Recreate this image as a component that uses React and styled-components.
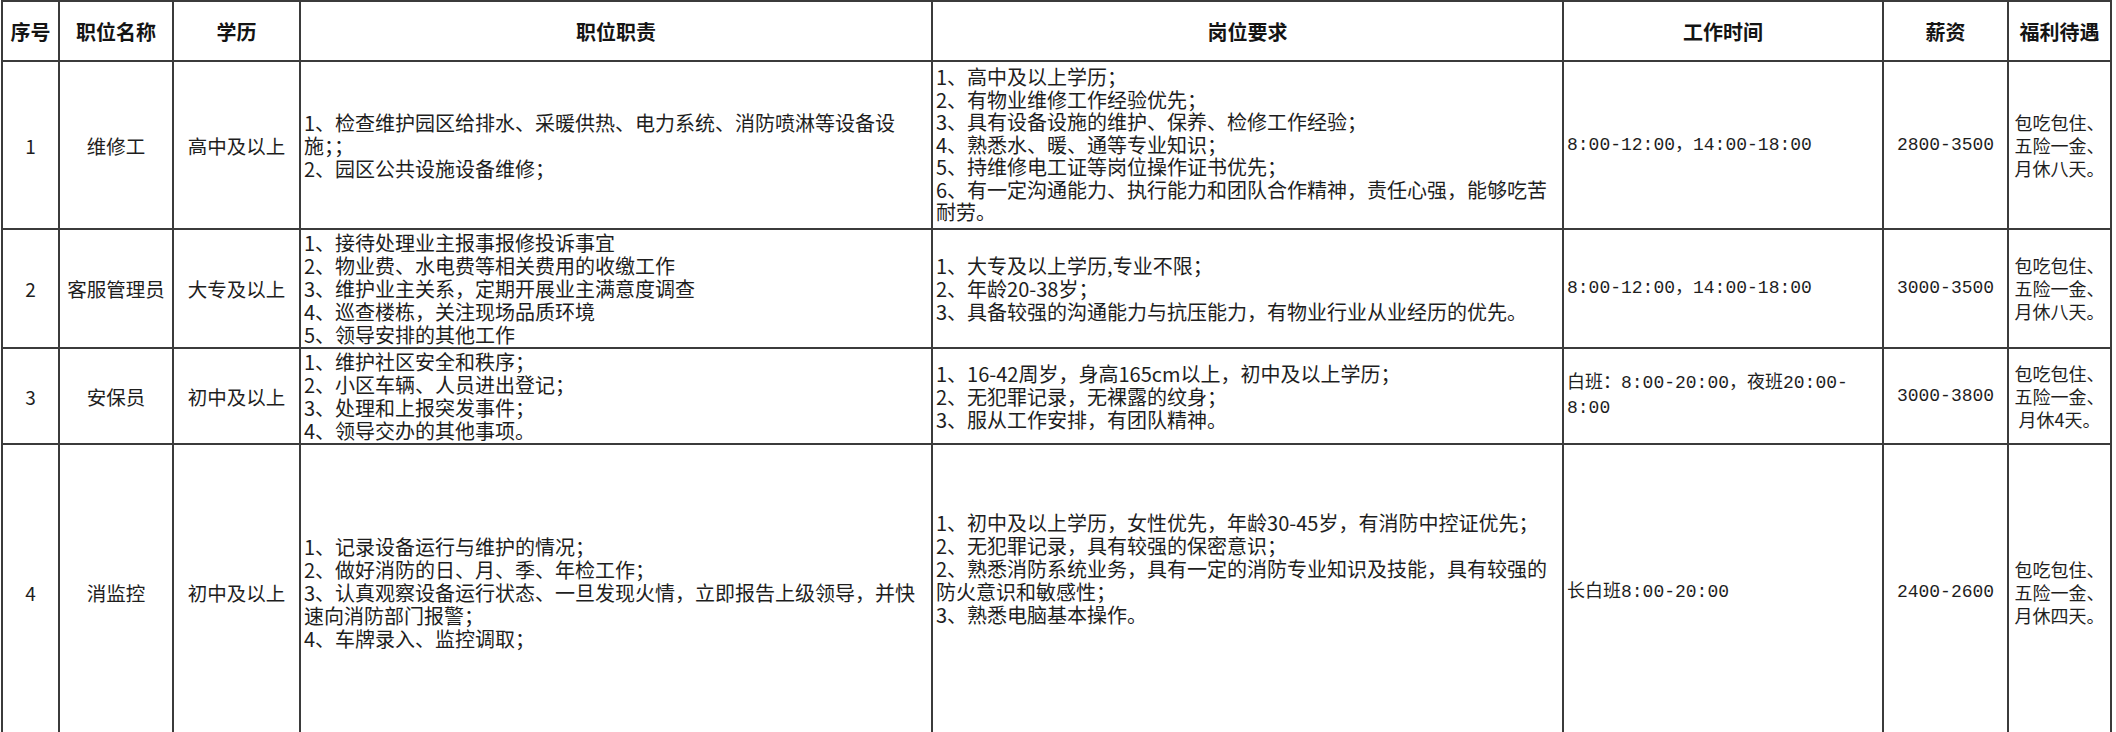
import React from "react";
import styled, { createGlobalStyle } from "styled-components";

const Global = createGlobalStyle`
  html, body {
    margin: 0;
    padding: 0;
    background: #ffffff;
    overflow: hidden;
  }
  body {
    font-family: "Noto Sans CJK SC", "Noto Sans", sans-serif;
    color: #1e1e1e;
  }
`;

const Sheet = styled.div`
  display: grid;
  grid-template-columns: 55px 112px 125px 630px 629px 318px 123px 101px;
  grid-template-rows: 58px 166px 117px 94px 294px;
  gap: 2px;
  padding: 2px;
  margin-left: 1px;
  width: max-content;
  background: #3b3b3b;
`;

const HeadCell = styled.div`
  background: #ffffff;
  display: flex;
  align-items: center;
  justify-content: center;
  font-family: "Noto Sans CJK SC", sans-serif;
  font-weight: 700;
  font-size: 20px;
  color: #141414;
  white-space: nowrap;
`;

const fonts = {
  body: `"Noto Sans CJK SC", "Noto Sans", sans-serif`,
  mono: `"Liberation Mono", "Noto Sans CJK SC", monospace`,
};

const Cell = styled.div`
  background: #ffffff;
  display: flex;
  flex-direction: column;
  justify-content: center;
  align-items: ${(p) => (p.$align === "left" ? "flex-start" : "center")};
  text-align: ${(p) => (p.$align === "left" ? "left" : "center")};
  padding-left: ${(p) => (p.$align === "left" ? "3px" : "2px")};
  padding-right: 2px;
  padding-bottom: ${(p) => (p.$lift ? `${p.$lift}px` : "0")};
  font-family: ${(p) => fonts[p.$font || "body"]};
  font-size: ${(p) => p.$size || 20}px;
  line-height: ${(p) => p.$lh || 23}px;
  min-width: 0;
  box-sizing: border-box;
`;

const Line = styled.div`
  white-space: pre;
`;

const columns = ["序号", "职位名称", "学历", "职位职责", "岗位要求", "工作时间", "薪资", "福利待遇"];

const jobs = [
  {
    no: "1",
    name: "维修工",
    edu: "高中及以上",
    duty: [
      "1、检查维护园区给排水、采暖供热、电力系统、消防喷淋等设备设",
      "施；；",
      "2、园区公共设施设备维修；",
    ],
    req: [
      "1、高中及以上学历；",
      "2、有物业维修工作经验优先；",
      "3、具有设备设施的维护、保养、检修工作经验；",
      "4、熟悉水、暖、通等专业知识；",
      "5、持维修电工证等岗位操作证书优先；",
      "6、有一定沟通能力、执行能力和团队合作精神，责任心强，能够吃苦",
      "耐劳。",
    ],
    reqLh: 22.5,
    time: ["8:00-12:00，14:00-18:00"],
    pay: "2800-3500",
    welfare: ["包吃包住、", "五险一金、", "月休八天。"],
  },
  {
    no: "2",
    name: "客服管理员",
    edu: "大专及以上",
    duty: [
      "1、接待处理业主报事报修投诉事宜",
      "2、物业费、水电费等相关费用的收缴工作",
      "3、维护业主关系，定期开展业主满意度调查",
      "4、巡查楼栋，关注现场品质环境",
      "5、领导安排的其他工作",
    ],
    req: [
      "1、大专及以上学历,专业不限；",
      "2、年龄20-38岁；",
      "3、具备较强的沟通能力与抗压能力，有物业行业从业经历的优先。",
    ],
    time: ["8:00-12:00，14:00-18:00"],
    pay: "3000-3500",
    welfare: ["包吃包住、", "五险一金、", "月休八天。"],
  },
  {
    no: "3",
    name: "安保员",
    edu: "初中及以上",
    duty: [
      "1、维护社区安全和秩序；",
      "2、小区车辆、人员进出登记；",
      "3、处理和上报突发事件；",
      "4、领导交办的其他事项。",
    ],
    req: [
      "1、16-42周岁，身高165cm以上，初中及以上学历；",
      "2、无犯罪记录，无裸露的纹身；",
      "3、服从工作安排，有团队精神。",
    ],
    time: ["白班：8:00-20:00，夜班20:00-", "8:00"],
    pay: "3000-3800",
    welfare: ["包吃包住、", "五险一金、", "月休4天。"],
  },
  {
    no: "4",
    name: "消监控",
    edu: "初中及以上",
    duty: [
      "1、记录设备运行与维护的情况；",
      "2、做好消防的日、月、季、年检工作；",
      "3、认真观察设备运行状态、一旦发现火情，立即报告上级领导，并快",
      "速向消防部门报警；",
      "4、车牌录入、监控调取；",
    ],
    req: [
      "1、初中及以上学历，女性优先，年龄30-45岁，有消防中控证优先；",
      "2、无犯罪记录，具有较强的保密意识；",
      "2、熟悉消防系统业务，具有一定的消防专业知识及技能，具有较强的",
      "防火意识和敏感性；",
      "3、熟悉电脑基本操作。",
    ],
    reqLift: 48,
    time: ["长白班8:00-20:00"],
    pay: "2400-2600",
    welfare: ["包吃包住、", "五险一金、", "月休四天。"],
  },
];

const Lines = ({ items }) => items.map((t, i) => <Line key={i}>{t}</Line>);

export default function App() {
  return (
    <>
      <Global />
      <Sheet>
        {columns.map((c) => (
          <HeadCell key={c}>{c}</HeadCell>
        ))}
        {jobs.map((j) => (
          <React.Fragment key={j.no}>
            <Cell $size={19}>{j.no}</Cell>
            <Cell $size={19.5}>{j.name}</Cell>
            <Cell $size={19.5}>{j.edu}</Cell>
            <Cell $align="left">
              <Lines items={j.duty} />
            </Cell>
            <Cell $align="left" $lh={j.reqLh} $lift={j.reqLift}>
              <Lines items={j.req} />
            </Cell>
            <Cell $align="left" $font="mono" $size={18} $lh={25}>
              <Lines items={j.time} />
            </Cell>
            <Cell $font="mono" $size={18}>
              {j.pay}
            </Cell>
            <Cell $size={18}>
              <Lines items={j.welfare} />
            </Cell>
          </React.Fragment>
        ))}
      </Sheet>
    </>
  );
}
